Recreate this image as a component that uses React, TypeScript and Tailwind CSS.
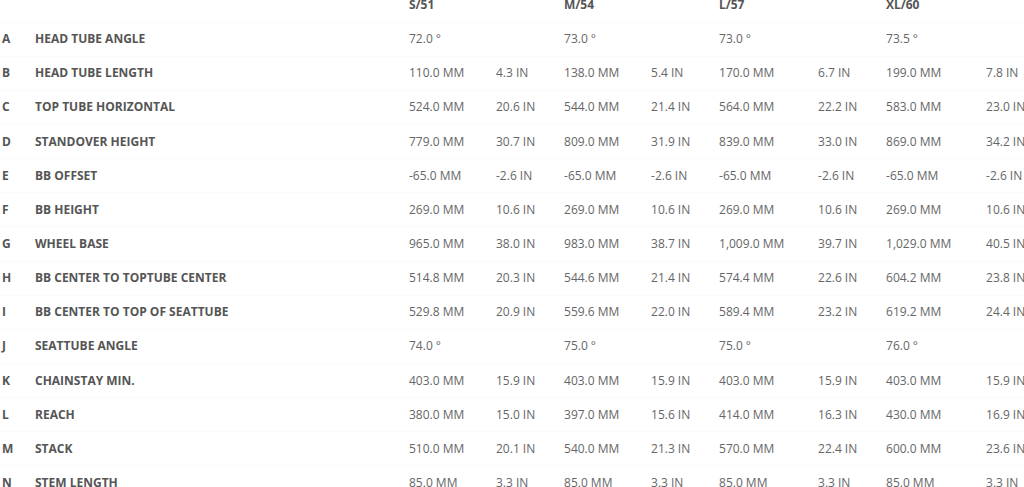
import React from "react";

interface Row {
    key: string;
    name: string;
    values: [string, string][];
}

const sizes = ["S/51", "M/54", "L/57", "XL/60"];

const rows: Row[] = [
    { key: "A", name: "HEAD TUBE ANGLE", values: [["72.0 °", ""], ["73.0 °", ""], ["73.0 °", ""], ["73.5 °", ""]] },
    { key: "B", name: "HEAD TUBE LENGTH", values: [["110.0 MM", "4.3 IN"], ["138.0 MM", "5.4 IN"], ["170.0 MM", "6.7 IN"], ["199.0 MM", "7.8 IN"]] },
    { key: "C", name: "TOP TUBE HORIZONTAL", values: [["524.0 MM", "20.6 IN"], ["544.0 MM", "21.4 IN"], ["564.0 MM", "22.2 IN"], ["583.0 MM", "23.0 IN"]] },
    { key: "D", name: "STANDOVER HEIGHT", values: [["779.0 MM", "30.7 IN"], ["809.0 MM", "31.9 IN"], ["839.0 MM", "33.0 IN"], ["869.0 MM", "34.2 IN"]] },
    { key: "E", name: "BB OFFSET", values: [["-65.0 MM", "-2.6 IN"], ["-65.0 MM", "-2.6 IN"], ["-65.0 MM", "-2.6 IN"], ["-65.0 MM", "-2.6 IN"]] },
    { key: "F", name: "BB HEIGHT", values: [["269.0 MM", "10.6 IN"], ["269.0 MM", "10.6 IN"], ["269.0 MM", "10.6 IN"], ["269.0 MM", "10.6 IN"]] },
    { key: "G", name: "WHEEL BASE", values: [["965.0 MM", "38.0 IN"], ["983.0 MM", "38.7 IN"], ["1,009.0 MM", "39.7 IN"], ["1,029.0 MM", "40.5 IN"]] },
    { key: "H", name: "BB CENTER TO TOPTUBE CENTER", values: [["514.8 MM", "20.3 IN"], ["544.6 MM", "21.4 IN"], ["574.4 MM", "22.6 IN"], ["604.2 MM", "23.8 IN"]] },
    { key: "I", name: "BB CENTER TO TOP OF SEATTUBE", values: [["529.8 MM", "20.9 IN"], ["559.6 MM", "22.0 IN"], ["589.4 MM", "23.2 IN"], ["619.2 MM", "24.4 IN"]] },
    { key: "J", name: "SEATTUBE ANGLE", values: [["74.0 °", ""], ["75.0 °", ""], ["75.0 °", ""], ["76.0 °", ""]] },
    { key: "K", name: "CHAINSTAY MIN.", values: [["403.0 MM", "15.9 IN"], ["403.0 MM", "15.9 IN"], ["403.0 MM", "15.9 IN"], ["403.0 MM", "15.9 IN"]] },
    { key: "L", name: "REACH", values: [["380.0 MM", "15.0 IN"], ["397.0 MM", "15.6 IN"], ["414.0 MM", "16.3 IN"], ["430.0 MM", "16.9 IN"]] },
    { key: "M", name: "STACK", values: [["510.0 MM", "20.1 IN"], ["540.0 MM", "21.3 IN"], ["570.0 MM", "22.4 IN"], ["600.0 MM", "23.6 IN"]] },
    { key: "N", name: "STEM LENGTH", values: [["85.0 MM", "3.3 IN"], ["85.0 MM", "3.3 IN"], ["85.0 MM", "3.3 IN"], ["85.0 MM", "3.3 IN"]] },
];

// mm column widths per size
const mmWidths = ["w-[87px]", "w-[87px]", "w-[99px]", "w-[100px]"];

const App: React.FC = () => {
    return (
        <div className="h-[487px] w-[1024px] overflow-hidden bg-white font-['Open_Sans',sans-serif] text-[12px]">
            <table className="-mt-[12px] w-[1024px] table-fixed border-collapse">
                <colgroup>
                    <col className="w-[35px]" />
                    <col className="w-[374px]" />
                    {mmWidths.map((w, i) => (
                        <React.Fragment key={i}>
                            <col className={w} />
                            <col className={i === 3 ? "w-[38px]" : "w-[68px]"} />
                        </React.Fragment>
                    ))}
                </colgroup>
                <thead>
                    <tr className="h-[34.15px]">
                        <th />
                        <th />
                        {sizes.map((s) => (
                            <th key={s} colSpan={2} className="p-0 text-left font-bold text-[#555]">
                                {s}
                            </th>
                        ))}
                    </tr>
                </thead>
                <tbody>
                    {rows.map((row) => (
                        <tr key={row.key} className="h-[34.15px] border-t border-[#fafafa]">
                            <td className="p-0 pl-[2px] font-bold text-[#555]">{row.key}</td>
                            <td className="p-0 font-bold text-[#555]">{row.name}</td>
                            {row.values.map(([mm, inch], i) => (
                                <React.Fragment key={i}>
                                    <td className="whitespace-nowrap p-0 text-[#666]">{mm}</td>
                                    <td className="whitespace-nowrap p-0 text-[#666]">{inch}</td>
                                </React.Fragment>
                            ))}
                        </tr>
                    ))}
                </tbody>
            </table>
        </div>
    );
};

export default App;
